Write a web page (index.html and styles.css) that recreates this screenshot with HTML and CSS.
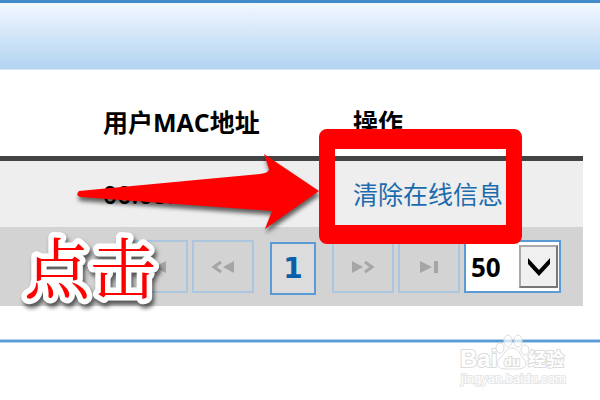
FILE: index.html
```html
<!DOCTYPE html>
<html lang="zh-CN">
<head>
  <meta charset="utf-8">
  <title>在线信息</title>
  <link rel="stylesheet" href="styles.css">
</head>
<body>
  <div class="page">
    <div class="toolbar"></div>

    <table class="users">
      <thead>
        <tr>
          <th class="mac">用户MAC地址</th>
          <th class="action">操作</th>
        </tr>
      </thead>
      <tbody>
        <tr>
          <td class="mac address">00:08:22:1c:1f:1a</td>
          <td class="action"><a href="#">清除在线信息</a></td>
        </tr>
      </tbody>
      <tfoot>
        <tr>
          <td colspan="2">
            <div class="pager">
              <button class="nav" disabled aria-label="首页">
                <svg width="24" height="14" viewBox="0 0 24 14"><path d="M3 1h4v12H3zM21 1v12L9 7z"/></svg>
              </button>
              <button class="nav" disabled aria-label="上一页">
                <svg width="24" height="14" viewBox="0 0 24 14"><path d="M23 1v12L12 7z"/><path class="line" d="M10 2L3 7l7 5"/></svg>
              </button>
              <button class="current">1</button>
              <button class="nav" disabled aria-label="下一页">
                <svg width="24" height="14" viewBox="0 0 24 14"><path d="M1 1v12l11-6z"/><path class="line" d="M14 2l7 5-7 5"/></svg>
              </button>
              <button class="nav" disabled aria-label="末页">
                <svg width="24" height="14" viewBox="0 0 24 14"><path d="M3 1v12l12-6zM17 1h4v12h-4z"/></svg>
              </button>
              <div class="page-size">
                <select aria-label="每页条数">
                  <option>50</option>
                  <option>100</option>
                </select>
                <span class="arrow-box">
                  <svg width="24" height="20" viewBox="0 0 24 20"><path d="M1 1l11 12L23 1v6L12 19 1 7z"/></svg>
                </span>
              </div>
            </div>
          </td>
        </tr>
      </tfoot>
    </table>

    <div class="bottom-line"></div>

    <!-- annotations over the page -->
    <svg class="pointer" width="250" height="84" viewBox="0 0 250 84">
      <path d="M4 42L185 25Q194 24 194 20L189 5 244 42 190 80 197 62 5 48Q0 46 4 42z"/>
    </svg>
    <div class="highlight"></div>
    <svg class="callout" width="150" height="100" viewBox="0 0 150 100">
      <text x="6" y="71">点击</text>
    </svg>
    <svg class="watermark" width="120" height="60" viewBox="0 0 120 60">
      <text class="brand" x="4" y="36">Bai</text>
      <g>
        <ellipse cx="44" cy="17" rx="4" ry="5"/>
        <ellipse cx="52" cy="10" rx="4" ry="6"/>
        <ellipse cx="62" cy="10" rx="4" ry="6"/>
        <ellipse cx="69" cy="19" rx="4" ry="5"/>
        <path d="M56 17c7 0 7 6 11 10 6 6 2 11-5 11H49c-8 0-10-6-5-11 5-4 5-10 12-10z"/>
      </g>
      <text class="du" x="48" y="35">du</text>
      <text class="name" x="72" y="35">经验</text>
      <text class="site" x="5" y="52">jingyan.baidu.com</text>
    </svg>
  </div>
</body>
</html>
```

FILE: styles.css
```css
* {
  box-sizing: border-box;
}
body {
  margin: 0;
  background: #fff;
  font-family: "Open Sans", "Noto Sans CJK SC", sans-serif;
  color: #000;
}
.page {
  position: relative;
  min-height: 100vh;
  overflow: hidden;
}
.toolbar {
  height: 70px;
  border-top: 3px solid #438bc8;
  border-bottom: 1px solid #d5e7f9;
  background: linear-gradient(#f2f8ff, #b2d3f2);
}

/* table */
.users {
  width: calc(100% - 17px);
  border-collapse: collapse;
  table-layout: fixed;
}
.users th,
.users td {
  padding: 0;
  text-align: left;
  white-space: nowrap;
}
.users th {
  height: 88px;
  padding-top: 18px;
  border-bottom: 5px solid #444;
  font-size: 25px;
  line-height: 36px;
}
.users tbody td {
  height: 69px;
  background: #eee;
  font-size: 25px;
  line-height: 36px;
}
.users .mac {
  width: 353px;
  padding-left: 103px;
}
.users .address {
  font-weight: 600;
}
.users a {
  color: #1b6cae;
  text-decoration: none;
}
.users tfoot td {
  height: 79px;
  background: #d3d3d3;
}

/* pager */
.pager {
  display: flex;
  justify-content: flex-end;
  align-items: center;
  gap: 4px;
  padding-right: 22px;
}
.pager button {
  height: 53px;
  padding: 0;
  border: 2px solid #abc6de;
  background: #d3d3d3;
}
.pager .nav {
  width: 62px;
}
.pager .nav svg {
  display: block;
  margin: 0 auto;
  fill: #a5a5a5;
}
.pager .nav .line {
  fill: none;
  stroke: #a5a5a5;
  stroke-width: 3;
}
.pager .current {
  width: 46px;
  margin: 4px 12px 0;
  border-color: #5b9bd5;
  background: #dcdcdc;
  color: #0b5fa8;
  font: bold 28px "DejaVu Sans", sans-serif;
}
.page-size {
  position: relative;
  width: 97px;
  height: 53px;
}
.page-size select {
  width: 100%;
  height: 100%;
  padding: 0 0 0 5px;
  border: 2px solid #5b9bd5;
  border-radius: 0;
  background: #fff;
  color: #000;
  font: bold 26px "Open Sans", sans-serif;
  appearance: none;
}
.arrow-box {
  position: absolute;
  top: 5px;
  right: 3px;
  display: flex;
  align-items: center;
  justify-content: center;
  width: 39px;
  height: 43px;
  border: 2px solid #777;
  border-top-color: #aaa;
  border-left-color: #aaa;
  background: #f0f0f0;
  pointer-events: none;
}

.bottom-line {
  height: 4px;
  margin-top: 33px;
  border-top: 1px solid #b4d2ee;
  border-bottom: 1px solid #b4d2ee;
  background: #5b9bd5;
}

/* annotations */
.pointer {
  position: absolute;
  top: 149px;
  left: 75px;
  overflow: visible;
  fill: #f00;
  filter: drop-shadow(1px 4px 2px rgba(0, 0, 0, 0.6));
}
.highlight {
  position: absolute;
  top: 129px;
  left: 319px;
  width: 203px;
  height: 115px;
  border: solid #f00;
  border-width: 20px 16px 19px;
  border-radius: 8px;
}
.callout {
  position: absolute;
  top: 222px;
  left: 18px;
  overflow: visible;
  filter: drop-shadow(2px 4px 2px rgba(0, 0, 0, 0.6));
}
.callout text {
  fill: #f00;
  stroke: #fff;
  stroke-width: 11px;
  stroke-linejoin: round;
  paint-order: stroke;
  font: 66px "Noto Serif CJK SC", "Noto Sans CJK SC", serif;
}
.watermark {
  position: absolute;
  top: 331px;
  left: 456px;
  fill: #fff;
  stroke: #dcdcdc;
  stroke-width: 1px;
}
.watermark ellipse {
  fill-opacity: 0.7;
}
.watermark text {
  paint-order: stroke;
  stroke-width: 2px;
  font-family: "Liberation Sans", "Noto Sans CJK SC", sans-serif;
}
.watermark .brand {
  font-size: 24px;
  font-weight: bold;
}
.watermark .du {
  font-size: 13px;
  font-weight: bold;
}
.watermark .name {
  font-size: 18px;
  font-weight: bold;
}
.watermark .site {
  font-size: 13px;
  stroke: #e6e6e6;
}
```
